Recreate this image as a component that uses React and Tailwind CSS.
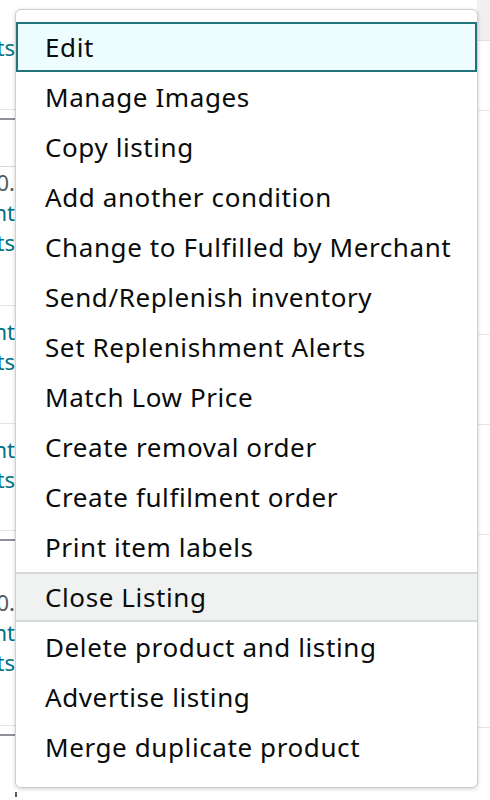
import React from "react";

const items = [
  "Edit",
  "Manage Images",
  "Copy listing",
  "Add another condition",
  "Change to Fulfilled by Merchant",
  "Send/Replenish inventory",
  "Set Replenishment Alerts",
  "Match Low Price",
  "Create removal order",
  "Create fulfilment order",
  "Print item labels",
  "Close Listing",
  "Delete product and listing",
  "Advertise listing",
  "Merge duplicate product",
];

function LeftCell({ h, lines = [], border = "border-b border-[#e3e6e6]", bg = "bg-white" }) {
  return (
    <div className={`${bg} ${border} flex flex-col items-end overflow-hidden`} style={{ height: h }}>
      {lines.map((l, i) => (
        <div key={i} className={`whitespace-nowrap text-[22px] leading-[30px] ${l.c}`} style={{ marginTop: i === 0 ? l.t : 0 }}>
          {l.text}
        </div>
      ))}
    </div>
  );
}

export default function App() {
  return (
    <div className="relative w-[490px] h-[800px] overflow-hidden bg-white font-['Noto_Sans',sans-serif] text-[#0f1111]">
      <div className="flex h-full">
        <div className="w-[15px] flex flex-col">
          <LeftCell h={110} lines={[{ text: "Add products", c: "text-[#007185]", t: 32 }]} border="border-b border-[#e3e6e6]" />
          <div className="h-[10px] border-b-2 border-[#8d9096]" />
          <LeftCell h={47} border="border-b border-[#d5d9d9]" />
          <LeftCell
            h={139}
            lines={[
              { text: "£10.", c: "text-[#565959]", t: 0 },
              { text: "Current", c: "text-[#007185]" },
              { text: "Products", c: "text-[#007185]" },
            ]}
          />
          <LeftCell
            h={118}
            lines={[
              { text: "Current", c: "text-[#007185]", t: 10 },
              { text: "Products", c: "text-[#007185]" },
            ]}
          />
          <LeftCell
            h={107}
            lines={[
              { text: "Current", c: "text-[#007185]", t: 10 },
              { text: "Products", c: "text-[#007185]" },
            ]}
          />
          <div className="h-[10px] border-b-2 border-[#8d9096]" />
          <LeftCell
            h={185}
            lines={[
              { text: "£10.", c: "text-[#565959]", t: 46 },
              { text: "Current", c: "text-[#007185]" },
              { text: "Products", c: "text-[#007185]" },
            ]}
          />
          <div className="h-[10px] border-b-2 border-[#8d9096]" />
          <div className="flex-1 flex justify-end">
            <div className="mt-[56px] mr-[-2px] w-[2px] h-[5px] bg-[#565959]" />
          </div>
        </div>
        <div className="flex-1" />
        <div className="w-[13px] flex flex-col">
          <div className="h-[41px] bg-[#f0f0f0] border-b border-[#e0e0e0]" />
          <div className="h-[70px] border-b border-[#e3e6e6]" />
          <div className="h-[224px] border-b border-[#e3e6e6]" />
          <div className="h-[90px] border-b border-[#e3e6e6]" />
          <div className="h-[110px] border-b border-[#e3e6e6]" />
          <div className="h-[193px] border-b border-[#e3e6e6]" />
        </div>
      </div>

      <div className="absolute left-[15px] top-[9px] w-[463px] h-[779px] bg-white border border-[#cfcfcf] rounded-[6px] shadow-[0_1px_4px_rgba(0,0,0,0.18)] pt-[12px] text-[26px] tracking-[0.6px] text-[#0a0c0c]">
        {items.map((t, i) => {
          if (i === 0)
            return (
              <div key={t} className="h-[50px] flex items-center pl-[27px] bg-[#edfdff] border-2 border-[#21737e]">
                {t}
              </div>
            );
          if (t === "Close Listing")
            return (
              <div key={t} className="h-[50px] flex items-center pl-[29px] bg-[#f0f2f2] border-y-2 border-[#d5d9d9]">
                {t}
              </div>
            );
          return (
            <div key={t} className="h-[50px] flex items-center pl-[29px]">
              {t}
            </div>
          );
        })}
      </div>
    </div>
  );
}
